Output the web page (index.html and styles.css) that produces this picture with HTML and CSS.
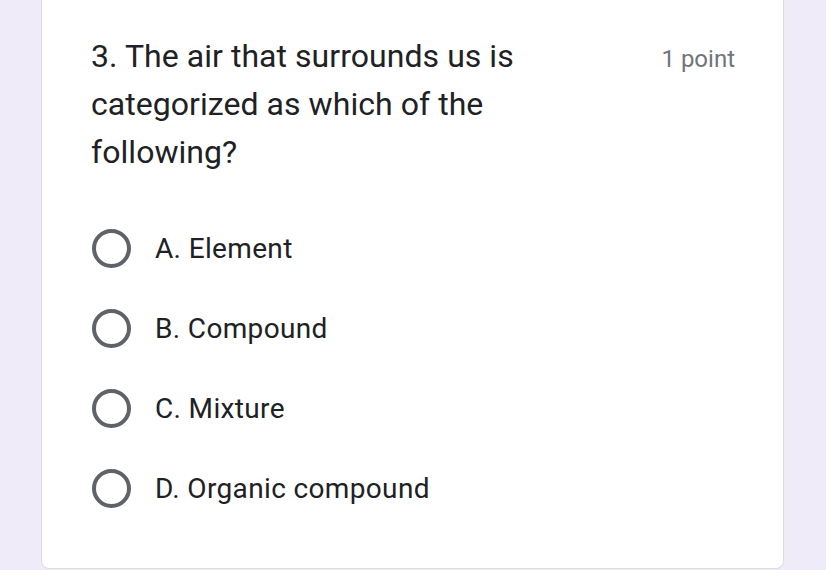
FILE: index.html
```html
<!DOCTYPE html>
<html>
<head>
<meta charset="utf-8">
<link rel="stylesheet" href="styles.css">
</head>
<body>
<div class="card">
  <div class="header">
    <div class="question">3. The air that surrounds us is categorized as which of the following?</div>
    <div class="points">1 point</div>
  </div>
  <div class="options">
    <div class="option"><span class="radio"></span><span class="label">A. Element</span></div>
    <div class="option"><span class="radio"></span><span class="label">B. Compound</span></div>
    <div class="option"><span class="radio"></span><span class="label">C. Mixture</span></div>
    <div class="option"><span class="radio"></span><span class="label">D. Organic compound</span></div>
  </div>
</div>
</body>
</html>
```
FILE: styles.css
```css
html, body {
  margin: 0;
  padding: 0;
  background: #f0ebf8;
  height: 100%;
  overflow: hidden;
}
.card {
  box-sizing: border-box;
  margin-left: 41px;
  width: 743px;
  height: 569px;
  background: #ffffff;
  border: 1px solid #dadce0;
  border-top: none;
  border-radius: 0 0 8px 8px;
  padding: 32px 48px 0 49px;
}
.header {
  display: flex;
  justify-content: space-between;
  align-items: baseline;
}
.question {
  width: 500px;
  font-family: Roboto, "Liberation Sans", sans-serif;
  font-size: 32px;
  letter-spacing: 0.05px;
  line-height: 48px;
  color: #202124;
}
.points {
  font-family: Roboto, "Liberation Sans", sans-serif;
  font-size: 24px;
  color: #70757a;
}
.options {
  margin-top: 32px;
  display: flex;
  flex-direction: column;
}
.option {
  height: 80px;
  display: flex;
  align-items: center;
  gap: 24px;
}
.radio {
  box-sizing: border-box;
  width: 39px;
  height: 39px;
  border: 4px solid #5f6368;
  border-radius: 50%;
  flex: none;
  margin-left: 1px;
}
.label {
  font-family: Roboto, "Liberation Sans", sans-serif;
  font-size: 28px;
  letter-spacing: 0.35px;
  color: #202124;
}
```
